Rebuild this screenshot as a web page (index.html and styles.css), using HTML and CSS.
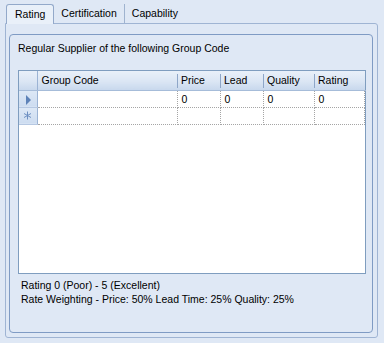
FILE: index.html
```html
<!DOCTYPE html>
<html lang="en">
<head>
  <meta charset="UTF-8" />
  <title>Supplier Rating</title>
  <link rel="stylesheet" href="styles.css">
</head>
<body>
  <div class="tabs">
    <div class="tab active">Rating</div>
    <div class="tab">Certification</div>
    <div class="tab">Capability</div>
  </div>

  <div class="tab-page">
    <div class="group-box">
      <p class="caption">Regular Supplier of the following Group Code</p>

      <!-- grid -->
      <div class="grid">
        <table>
          <thead>
            <tr>
              <th class="row-head"></th>
              <th class="col-code">Group Code</th>
              <th class="col-price">Price</th>
              <th class="col-lead">Lead</th>
              <th class="col-quality">Quality</th>
              <th class="col-rating">Rating</th>
              <th class="filler"></th>
            </tr>
          </thead>
          <tbody>
            <tr>
              <td class="row-head"><span class="arrow"></span></td>
              <td></td>
              <td>0</td>
              <td>0</td>
              <td>0</td>
              <td>0</td>
              <td class="filler"></td>
            </tr>
            <tr>
              <td class="row-head">
                <svg class="star" width="9" height="9" viewBox="0 0 9 9">
                  <path d="M4.5 0.5V8.5M1 2.5L8 6.5M1 6.5L8 2.5" stroke="#6d8fc2" stroke-width="1" fill="none"/>
                </svg>
              </td>
              <td></td>
              <td></td>
              <td></td>
              <td></td>
              <td></td>
              <td class="filler"></td>
            </tr>
          </tbody>
        </table>
      </div>

      <div class="notes">
        <p>Rating 0 (Poor) - 5 (Excellent)</p>
        <p>Rate Weighting - Price: 50% Lead Time: 25% Quality: 25%</p>
      </div>
    </div>
  </div>
</body>
</html>
```

FILE: styles.css
```css
* {
  margin: 0;
  padding: 0;
  box-sizing: border-box;
}

body {
  background: #dfe8f5;
  font-family: 'Liberation Sans', Arial, sans-serif;
  font-size: 10.5px;
  color: #000;
  width: 384px;
  height: 343px;
  overflow: hidden;
}

/* tabs */
.tabs {
  display: flex;
  align-items: flex-end;
  height: 24px;
  padding: 4px 0 0 6px;
}

.tab {
  height: 19px;
  line-height: 18px;
  padding: 0 7px;
  border-right: 1px solid #9fb3cf;
  margin-bottom: 1px;
}

.tab:last-child {
  border-right: none;
}

.tab.active {
  height: 20px;
  margin-bottom: 0;
  padding: 0 8px;
  background: #e9f0f9;
  border: 1px solid #93a9ca;
  border-bottom: none;
  border-radius: 3px 3px 0 0;
  position: relative;
  z-index: 1;
}

.tab-page {
  margin: -1px 6px 0 5px;
  height: 315px;
  border: 1px solid #9fb4d3;
  border-radius: 0 3px 3px 3px;
  padding: 10px 4px 4px 3px;
}

.group-box {
  height: 100%;
  border: 1px solid #7f9bc4;
  border-radius: 4px;
  padding: 6px 6px 0 8px;
}

.caption {
  height: 14px;
  line-height: 14px;
  margin-bottom: 15px;
}

/* grid */
.grid {
  height: 204px;
  background: #fff;
  border: 1px solid #7f9dbf;
}

table {
  border-collapse: collapse;
  table-layout: fixed;
  width: 100%;
}

th {
  height: 19px;
  font-weight: normal;
  text-align: left;
  padding: 0 0 0 4px;
  background: linear-gradient(#e9f0f9, #dbe6f4 55%, #c8d8ed);
  border-bottom: 1px solid #a6bcd9;
  position: relative;
  white-space: nowrap;
}

th + th::before {
  content: "";
  position: absolute;
  left: 0;
  top: 3px;
  bottom: 2px;
  border-left: 1px solid #8ea6c8;
}

th.filler::before,
th.col-code::before {
  border-left: none;
}

th.row-head {
  width: 18px;
  border-right: 1px solid #9bb3d4;
}

.col-code { width: 140px; }
.col-price { width: 43px; }
.col-lead { width: 43px; }
.col-quality { width: 51px; }
.col-rating { width: 50px; }

td {
  height: 17px;
  padding: 0 0 0 4px;
  border-right: 1px dotted #a5a5a5;
  border-bottom: 1px dotted #a5a5a5;
}

td.filler {
  border: none;
  background: #fff;
}

td.row-head {
  padding: 0;
  background: linear-gradient(#dde8f6, #cddcf0);
  border-right: 1px solid #9bb3d4;
  border-bottom: 1px solid #b6c8e2;
  text-align: center;
}

.arrow {
  display: inline-block;
  width: 0;
  height: 0;
  border-top: 5px solid transparent;
  border-bottom: 5px solid transparent;
  border-left: 5px solid #5d82b8;
  vertical-align: middle;
  margin-left: 1px;
}

.star {
  display: block;
  margin: 0 auto;
}

/* notes */
.notes {
  margin-top: 4px;
  line-height: 14px;
  padding-left: 3px;
}
```
